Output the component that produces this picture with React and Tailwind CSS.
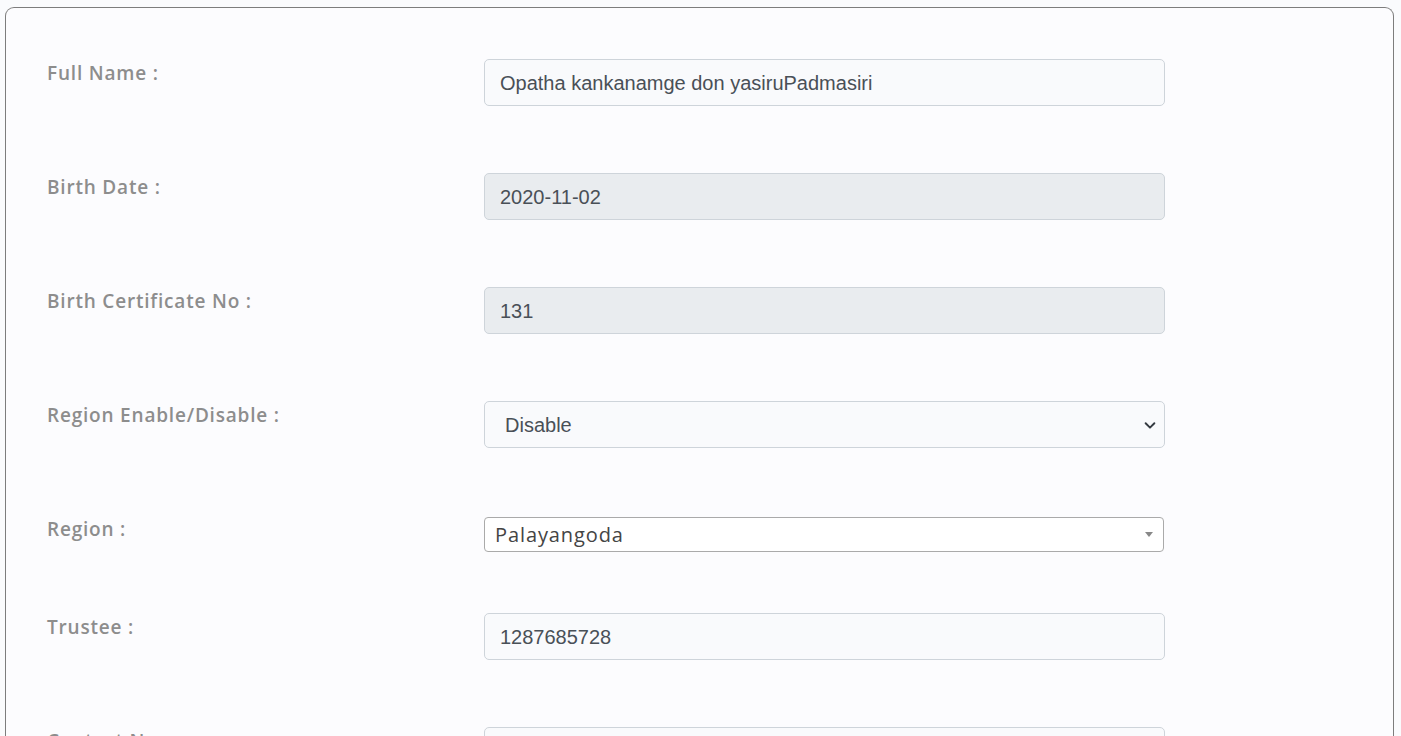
import React from 'react'

const labelCls = "w-[437px] shrink-0 pt-[3px] text-[19px] leading-[22px] font-semibold text-[#8d8d8d] font-['Open_Sans',sans-serif] tracking-[0.8px]"
const inputCls = "w-[681px] h-[47px] rounded-[5px] border border-[#ced4da] px-[15px] flex items-center text-[20px] text-[#495057] font-['Liberation_Sans',Arial,sans-serif]"

function Row({ label, children, tall = true }) {
  return (
    <div className={`flex items-start ${tall ? 'h-[114px]' : 'h-[98px]'}`}>
      <div className={labelCls}>{label}</div>
      {children}
    </div>
  )
}

export default function App() {
  return (
    <div className="min-h-screen bg-[#fafbfd] pt-[7px] pl-[5px] overflow-hidden">
      <div className="w-[1389px] h-[760px] rounded-t-[9px] border-[1.5px] border-b-0 border-[#7d7d7d] bg-[#fcfcfe] pl-[41px] pt-[51px]">
        <Row label="Full Name :">
          <div className={`${inputCls} bg-[#f9fafc]`}>Opatha kankanamge don yasiruPadmasiri</div>
        </Row>
        <Row label="Birth Date :">
          <div className={`${inputCls} bg-[#e9ecef]`}>2020-11-02</div>
        </Row>
        <Row label="Birth Certificate No :">
          <div className={`${inputCls} bg-[#e9ecef]`}>131</div>
        </Row>
        <Row label="Region Enable/Disable :">
          <div className={`${inputCls} bg-[#f9fafc] pl-[20px] justify-between pr-[7px]`}>
            <span>Disable</span>
            <svg width="14" height="14" viewBox="0 0 16 16" fill="none" stroke="#343a40" strokeWidth="2.2" strokeLinecap="round" strokeLinejoin="round">
              <path d="M3 6l5 5 5-5" />
            </svg>
          </div>
        </Row>
        <Row label="Region :" tall={false}>
          <div className="mt-[2px] w-[680px] h-[35px] rounded-[4px] border border-[#aaaaaa] bg-white pl-[10px] pr-[10px] flex items-center justify-between text-[20px] text-[#444] font-['Open_Sans',sans-serif]">
            <span className="tracking-[0.9px]">Palayangoda</span>
            <span className="w-0 h-0 border-l-[4.5px] border-r-[4.5px] border-t-[5px] border-l-transparent border-r-transparent border-t-[#888]" />
          </div>
        </Row>
        <Row label="Trustee :">
          <div className={`${inputCls} bg-[#f9fafc]`}>1287685728</div>
        </Row>
        <Row label="Contact No :">
          <div className={`${inputCls} bg-[#f9fafc]`}></div>
        </Row>
      </div>
    </div>
  )
}
